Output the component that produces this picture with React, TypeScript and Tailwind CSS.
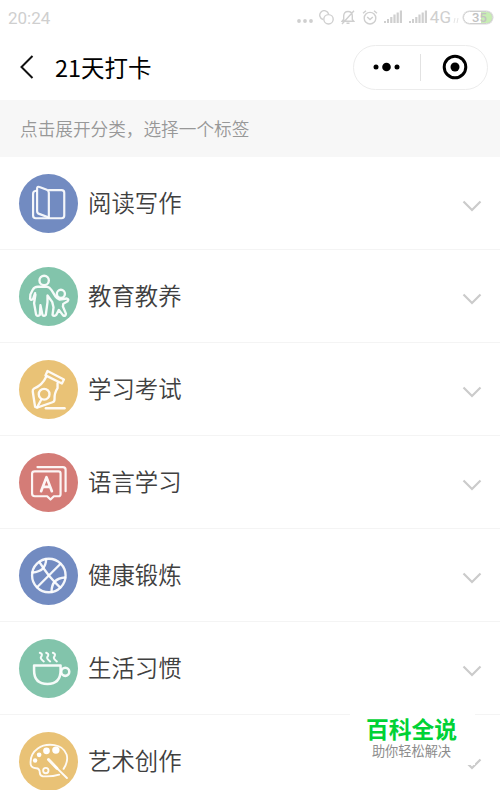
import type { ReactNode } from "react";

type Category = {
  name: string;
  color: string;
  icon: ReactNode;
};

const BookIcon = () => (
  <g strokeWidth="6.5">
    <path d="M51 50 Q42 51 42 59 V124 Q42 132 50 132 H127 Q135 132 135 124 V56 Q135 48 127 48 H89" />
    <path d="M54 43 Q54 36 61 39 L83 47 Q89 50 89 56 V130 L60 119 Q54 117 54 110 Z" />
  </g>
);

const FamilyIcon = () => (
  <g strokeWidth="7">
    <circle cx="75" cy="40" r="14" />
    <circle cx="125" cy="80" r="12" />
    <path d="M48 78 L42 95 Q37 101 33 95 L34 82 L41 68 Q46 59 56 59 H84 Q91 60 97 69 L109 88 Q114 95 121 97 L143 94 Q150 96 145 102 L132 110 L131 118 L140 139 Q140 147 132 145 L119 128 L111 143 Q104 149 100 143 L103 120 L99 104 L85 85 V105 L80 143 Q74 149 70 143 L64 114 L62 143 Q55 149 51 142 L45 108 L49 82" />
  </g>
);

const PenIcon = () => (
  <g strokeWidth="7">
    <path d="M85 33 L134 58 L128 70 L79 46 Z" />
    <path d="M81 50 Q70 75 45 85 Q40 88 41 94 L48 140 L54 142 L100 126 Q106 124 106 117 Q105 99 115 84 V69" />
    <circle cx="75" cy="102" r="16" />
    <path d="M67 117 L54 141" />
    <path d="M80 144 H136" />
  </g>
);

const LanguageIcon = () => (
  <g strokeWidth="6.5">
    <path d="M55 42 H131 Q139 42 139 50 V114" />
    <path d="M47 55 H118 Q124 55 124 61 V123 Q124 129 118 129 H104 L94 139 L84 129 H47 Q39 129 39 121 V62 Q39 55 47 55 Z" />
    <path strokeWidth="8" d="M66 114 L82 72 L98 114 M72 101 H92" />
  </g>
);

const BallIcon = () => (
  <g strokeWidth="7">
    <circle cx="89" cy="88" r="50" />
    <path d="M124 53 L54 123" />
    <path d="M61 48 Q75 70 89 88 Q106 108 123 124" />
    <path d="M40 79 Q80 77 81 39" />
    <path d="M97 137 Q97 96 138 94" />
  </g>
);

const CupIcon = () => (
  <g strokeWidth="7.5">
    <path d="M45 79 H124 V94 Q124 134 85 134 Q45 134 45 94 Z" />
    <circle cx="138" cy="98" r="12" />
    <g strokeWidth="6">
      <path d="M62 41 Q70 44 68 49 L65 55 Q64 59 74 67" />
      <path d="M81 41 Q89 44 87 49 L84 55 Q83 59 93 67" />
      <path d="M101 41 Q109 44 107 49 L104 55 Q103 59 113 67" />
    </g>
  </g>
);

const PaletteIcon = () => (
  <g strokeWidth="5.5">
    <path d="M120 127 Q97 134 71 132 Q63 131 62 122 Q62 108 51 108 Q38 108 35 98 Q31 67 56 49 Q75 35 106 39 Q133 43 142 67 Q148 87 133 110" />
    <circle cx="80" cy="115" r="8" />
    <path strokeWidth="9" d="M88 82 L113 108" />
    <path strokeWidth="6" d="M106 101 L143 137" />
    <g fill="#fff" stroke="none">
      <circle cx="110" cy="54" r="11" />
      <circle cx="82" cy="56" r="10" />
      <circle cx="60" cy="68" r="7" />
      <circle cx="48" cy="85" r="6.5" />
    </g>
  </g>
);

const categories: Category[] = [
  { name: "阅读写作", color: "bg-[#728bc1]", icon: <BookIcon /> },
  { name: "教育教养", color: "bg-[#82c4ab]", icon: <FamilyIcon /> },
  { name: "学习考试", color: "bg-[#e9c276]", icon: <PenIcon /> },
  { name: "语言学习", color: "bg-[#d47c77]", icon: <LanguageIcon /> },
  { name: "健康锻炼", color: "bg-[#728bc1]", icon: <BallIcon /> },
  { name: "生活习惯", color: "bg-[#82c4ab]", icon: <CupIcon /> },
  { name: "艺术创作", color: "bg-[#e9c276]", icon: <PaletteIcon /> },
];

const Signal = () => (
  <svg width="18" height="14" viewBox="0 0 18 14" fill="#cfcfcf">
    <rect x="0" y="11" width="2" height="2" />
    <rect x="3" y="9" width="2" height="4" />
    <rect x="6.2" y="7" width="2.2" height="6" />
    <rect x="9.4" y="4.5" width="2.2" height="8.5" />
    <rect x="12.6" y="2.5" width="2.2" height="10.5" />
    <rect x="15.8" y="0.5" width="2.2" height="12.5" />
  </svg>
);

const StatusBar = () => (
  <div className="flex h-[34px] items-center justify-between pr-[7px] pl-2 text-[#cfcfcf]">
    <span className="mt-0.5 font-[Roboto] text-[17px] leading-none">20:24</span>
    <div className="flex items-center">
      <svg className="mt-2" width="16" height="4" viewBox="0 0 16 4" fill="#cfcfcf">
        <circle cx="2" cy="2" r="1.9" />
        <circle cx="8" cy="2" r="1.9" />
        <circle cx="14" cy="2" r="1.9" />
      </svg>
      <svg className="ml-1.5" width="15" height="15" viewBox="0 0 15 15" fill="none" stroke="#cfcfcf" strokeWidth="1.4">
        <path d="M4 9.5 A4.5 4.5 0 1 1 9.6 4" />
        <circle cx="9.5" cy="9.3" r="4.7" />
      </svg>
      <svg className="ml-[7px]" width="14" height="15" viewBox="0 0 14 15" fill="none" stroke="#cfcfcf" strokeWidth="1.4">
        <path d="M2.7 10.5 V6 Q2.7 1.5 7 1.5 Q11.3 1.5 11.3 6 V9.5 L12.8 11.3 H1 L2.7 9.3 M5.5 13.3 H8.5 M13 0.8 L1 14" />
      </svg>
      <svg className="ml-[7px]" width="16" height="15" viewBox="0 0 16 15" fill="none" stroke="#cfcfcf" strokeWidth="1.4">
        <circle cx="8" cy="8.2" r="5.8" />
        <path d="M1 3.2 L4 0.8 M12 0.8 L15 3.2 M5.2 7 L8 9.6 L10.8 7" />
      </svg>
      <div className="ml-[6px] flex gap-[7px]">
        <Signal />
        <Signal />
      </div>
      <span className="ml-[3px] font-[Roboto] text-[17px] leading-none">4G</span>
      <svg className="mt-1.5 ml-0.5" width="6" height="5" viewBox="0 0 6 5" fill="none" stroke="#dedede" strokeWidth="0.8">
        <path d="M1 5 L2 0 M4 5 L5 0" />
      </svg>
      <div className="ml-1 flex h-[13px] w-[30px] items-center rounded-full border border-[#cfcfcf] bg-[linear-gradient(90deg,#fff_62%,#c8edb4_62%)] pl-2 ring-[0.5px] ring-[#d8d8d8]">
        <span className="font-[Roboto] text-[13px] leading-none font-medium text-[#c2c2c2]">35</span>
      </div>
    </div>
  </div>
);

const Header = () => (
  <header className="flex h-[66px] items-center pr-3 pl-5">
    <svg width="14" height="24" viewBox="0 0 14 24" fill="none" stroke="#111" strokeWidth="2">
      <path d="M12.5 1 L1.5 12 L12.5 23" />
    </svg>
    <h1 className="mt-0.5 ml-[21px] text-[23.5px] leading-none text-black">21天打卡</h1>
    <div className="ml-auto flex h-[45px] w-[135px] items-center rounded-full border border-[#ececec]">
      <div className="flex w-[66px] justify-center">
        <svg width="28" height="10" viewBox="0 0 28 10">
          <circle cx="3" cy="5" r="2.5" />
          <circle cx="13.5" cy="5" r="4.3" />
          <circle cx="24" cy="5" r="2.5" />
        </svg>
      </div>
      <div className="h-[27px] w-px bg-[#e2e2e2]" />
      <div className="flex flex-1 justify-center pl-0.5">
        <svg width="26" height="26" viewBox="0 0 26 26">
          <circle cx="13" cy="13" r="10.8" fill="none" stroke="#000" strokeWidth="3" />
          <circle cx="13" cy="13" r="4.5" />
        </svg>
      </div>
    </div>
  </header>
);

const CategoryRow = ({ name, color, icon }: Category) => (
  <li className="flex h-[93px] items-center border-b border-[#f4f4f4] pr-[18px] pl-[19px]">
    <div className={`size-[59px] shrink-0 rounded-full ${color}`}>
      <svg
        className="size-full"
        viewBox="0 0 176 176"
        fill="none"
        stroke="#fff"
        strokeOpacity="0.92"
        strokeLinecap="round"
        strokeLinejoin="round"
      >
        {icon}
      </svg>
    </div>
    <span className="ml-[10px] text-[23.4px] leading-none font-[350] text-[#404040]">{name}</span>
    <svg className="mt-1.5 ml-auto" width="20" height="12" viewBox="0 0 20 12" fill="none" stroke="#cbcbcb" strokeWidth="2.2">
      <path d="M1.5 1.5 L10 10 L18.5 1.5" />
    </svg>
  </li>
);

export default function App() {
  return (
    <div className="relative h-[790px] w-[500px] overflow-hidden bg-white font-['Noto_Sans_CJK_SC',sans-serif]">
      <StatusBar />
      <Header />
      <p className="flex h-[57px] items-center bg-[#f7f7f7] pl-5 text-[17.65px] leading-none font-[350] text-[#989898]">
        点击展开分类，选择一个标签
      </p>
      <ul className="-mt-px pt-px">
        {categories.map((category) => (
          <CategoryRow key={category.name} {...category} />
        ))}
      </ul>

      {/* site badge, sits on top of the last row */}
      <div className="absolute top-[705px] left-[350px] flex h-[60px] w-[125px] flex-col items-center bg-white pt-[12px] pr-0.5">
        <strong className="text-[22.8px] leading-[24px] font-bold text-[#00d235]">百科全说</strong>
        <span className="mt-0.5 text-[13.2px] leading-[16px] text-[#8c8c8c]">助你轻松解决</span>
      </div>
    </div>
  );
}
